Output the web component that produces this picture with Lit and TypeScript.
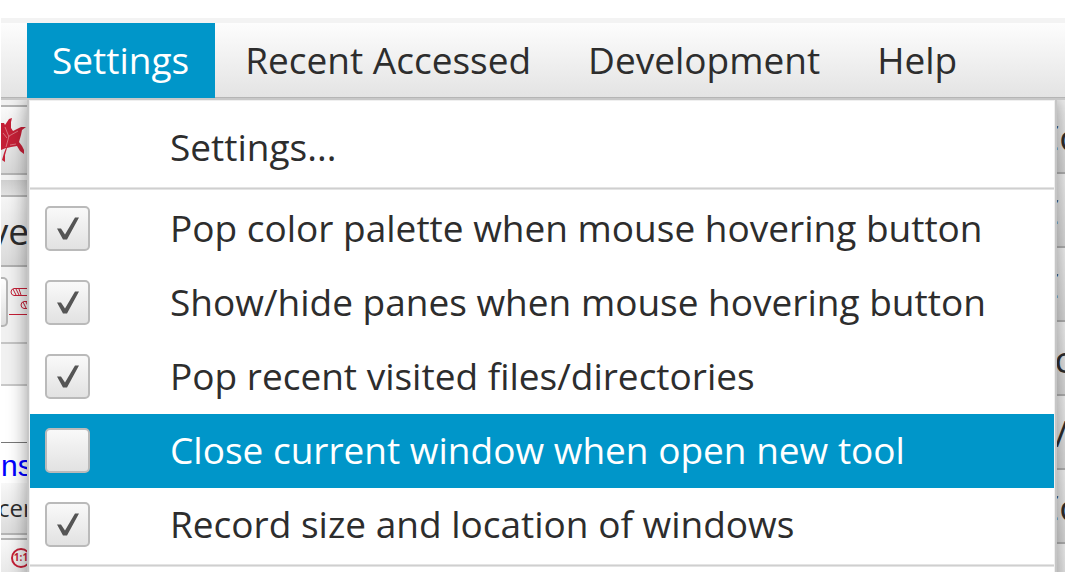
import { LitElement, html, css } from "lit";
import { customElement, state } from "lit/decorators.js";

interface Option {
  id: string;
  label: string;
  checked: boolean;
}

const MENUS = ["Settings", "Recent Accessed", "Development", "Help"];

const TOOLS = ["Co", "C|", "C|", "\u2002o", "\u2002/", "Co", "\u2002o"];

@customElement("app-root")
export class AppRoot extends LitElement {
  @state() private openMenu = "Settings";
  @state() private activeId = "close";
  @state() private options: Option[] = [
    { id: "palette", label: "Pop color palette when mouse hovering button", checked: true },
    { id: "panes", label: "Show/hide panes when mouse hovering button", checked: true },
    { id: "recent", label: "Pop recent visited files/directories", checked: true },
    { id: "close", label: "Close current window when open new tool", checked: false },
    { id: "record", label: "Record size and location of windows", checked: true },
  ];

  static styles = css`
    :host {
      display: flex;
      flex-direction: column;
      box-sizing: border-box;
      height: 100vh;
      padding: 18px 0 1px 1px;
      overflow: hidden;
      background: #fff;
      color: #2d2d2d;
      font-family: "Open Sans", "Noto Sans", sans-serif;
      font-size: 37px;
      line-height: 48px;
    }
    * {
      box-sizing: border-box;
    }
    .menubar {
      flex: none;
      display: flex;
      height: 80px;
      padding-left: 26px;
      border-top: 5px solid #f3f3f3;
      background: linear-gradient(#fdfdfd, #e3e3e3);
      box-shadow: inset 0 -1px #b5b5b5;
    }
    .menu {
      flex: none;
      padding: 0 26px 2px 25px;
      border: 0;
      background: none;
      color: inherit;
      font: inherit;
      white-space: nowrap;
    }
    .menu + .menu {
      padding: 0 27px 2px 30px;
    }
    .menu.open {
      background: #0096c9;
      color: #fff;
    }
    .workspace {
      position: relative;
      flex: 1;
      min-height: 0;
      display: flex;
      justify-content: space-between;
      overflow: hidden;
      border-top: 2px solid #c8c8c8;
    }
    .left {
      width: 44px;
      display: flex;
      flex-direction: column;
      overflow: hidden;
      background: #f1f1f1;
    }
    .left > * {
      flex: none;
      overflow: hidden;
      white-space: nowrap;
    }
    .tool {
      display: flex;
      align-items: flex-start;
      height: 70px;
      margin-top: 5px;
      padding: 10px 0 0;
      border: solid #b4b4b4;
      border-width: 2px 0;
      background: linear-gradient(#fafafa, #d8d8d8);
    }
    .strip {
      height: 17px;
      margin-top: 5px;
      border-bottom: 2px solid #b4b4b4;
      background: linear-gradient(#cfcfcf, #e2e2e2);
    }
    .header {
      height: 70px;
      padding-top: 10px;
      border-bottom: 2px solid #b0b0b0;
      background: linear-gradient(#f6f6f6, #dadada);
    }
    .header span {
      display: block;
      width: 28px;
      direction: rtl;
    }
    .icons {
      display: flex;
      gap: 1px;
      height: 77px;
      padding-top: 10px;
      border-bottom: 2px solid #c4c4c4;
    }
    .knob {
      width: 7px;
      height: 50px;
      padding: 0;
      border: 2px solid #b4b4b4;
      border-left: 0;
      border-radius: 0 5px 5px 0;
      background: linear-gradient(#fff, #dedede);
    }
    .band {
      height: 42px;
      border-bottom: 2px solid #c8c8c8;
    }
    .blank {
      height: 57px;
      border-bottom: 1px solid #777;
      background: #fff;
    }
    .link {
      height: 40px;
      background: #fff;
      color: #00f;
      font-family: "Liberation Sans", sans-serif;
      font-size: 30px;
      line-height: 46px;
      text-decoration: none;
    }
    .small {
      height: 52px;
      padding: 0;
      border: 0;
      border-bottom: 2px solid #b4b4b4;
      background: linear-gradient(#f8f8f8, #dcdcdc);
      color: inherit;
      font: 24px/50px "Open Sans", sans-serif;
      text-align: left;
      text-indent: -3px;
    }
    .ratio {
      display: flex;
      align-items: flex-start;
      height: 60px;
      margin-top: 3px;
      padding: 6px 0 0 8px;
      border: 0;
      border-top: 2px solid #b4b4b4;
      background: linear-gradient(#f8f8f8, #dcdcdc);
    }
    .ratio text {
      font: bold 10px "Open Sans", sans-serif;
    }
    svg {
      display: block;
      flex: none;
    }
    .right {
      width: 29px;
      display: flex;
      flex-direction: column;
      overflow: hidden;
    }
    .entry {
      flex: none;
      height: 74px;
      padding: 2px 0 0;
      border: 0;
      border-bottom: 2px solid #b0b0b0;
      background: linear-gradient(#f2f2f2, #d8d8d8);
      color: inherit;
      font: inherit;
      text-align: left;
      white-space: nowrap;
    }
    .popup {
      position: absolute;
      inset: -2px 8px auto 26px;
      padding: 1px;
      border: 2px solid #c6c6c6;
      background: #fff;
      box-shadow: inset 0 0 0 1px #efefef, 0 0 18px rgba(0, 0, 0, 0.4);
    }
    .item {
      display: flex;
      align-items: center;
      width: 100%;
      height: 74px;
      padding: 0 15px 2px;
      border: 0;
      background: none;
      color: inherit;
      font: inherit;
      text-align: left;
      white-space: nowrap;
    }
    .item.command {
      height: 86px;
      padding: 6px 15px 0 140px;
    }
    .item.active {
      background: #0096c9;
      color: #fff;
    }
    .separator {
      height: 3px;
      margin: 0 0 2px;
      border: solid #e4e4e4;
      border-width: 1px 0;
      background: #cfcfcf;
    }
    .item + .separator.last {
      margin: 2px 0 40px;
    }
    .box {
      appearance: none;
      flex: none;
      display: grid;
      width: 45px;
      height: 45px;
      margin: 0 80px 0 0;
      border: 2px solid #bababa;
      border-radius: 5px;
      background: linear-gradient(#f9f9f9, #e2e2e2);
    }
    .box:checked::before {
      content: "";
      background: #555;
      clip-path: polygon(10px 21px, 14px 21px, 18px 27px, 28px 10px, 32px 10px, 20px 32px, 16px 32px);
    }
  `;

  private toggle(id: string) {
    this.options = this.options.map((o) => (o.id === id ? { ...o, checked: !o.checked } : o));
  }

  private renderPopup() {
    return html`
      <div class="popup">
        <button class="item command">Settings...</button>
        <div class="separator"></div>
        ${this.options.map(
          (o) => html`
            <label
              class="item ${o.id === this.activeId ? "active" : ""}"
              for=${o.id}
              @mouseenter=${() => (this.activeId = o.id)}
            >
              <input class="box" type="checkbox" id=${o.id} .checked=${o.checked} @change=${() => this.toggle(o.id)} />
              <span>${o.label}</span>
            </label>
          `
        )}
        <div class="separator last"></div>
      </div>
    `;
  }

  render() {
    return html`
      <nav class="menubar">
        ${MENUS.map(
          (m) => html`<button class="menu ${m === this.openMenu ? "open" : ""}" @click=${() => (this.openMenu = m)}>${m}</button>`
        )}
      </nav>
      <main class="workspace">
        <div class="left">
          <button class="tool" aria-label="Leaf">
            <svg width="26" height="46" viewBox="0 0 26 46" fill="#c41f36">
              <path d="M0 6L3 6L4 8L6 5L8 2L11 1L10 5L10 11L12 14L16 12L20 10L25 10L21 13L20 18L18 25L21 29L23 33L23 37L19 34L16 29L10 30L6 31L4 38L4 45L1 43L3 36L5 31L0 33Z" />
              <path d="M5 30L8 19L17 14M8 20L4 10M9 28L15 27M2 16L6 21" fill="none" stroke="#df8690" stroke-width=".8" />
            </svg>
          </button>
          <div class="strip"></div>
          <div class="header"><span>ye</span></div>
          <div class="icons">
            <button class="knob" aria-label="Previous"></button>
            <svg width="34" height="50" viewBox="0 0 34 50" fill="none" stroke="#c41f36">
              <path d="M34 11.500H5Q2 12 2 15Q2 18 5 18.500H34M4 12L7 18M7 12L10 18M10 12L12 18M34 24.500H15Q12 25 12 28Q12 31 15 31.500H34M14 25L17 31M17 25L20 31M0 37.500H34" />
            </svg>
          </div>
          <div class="band"></div>
          <div class="blank"></div>
          <a class="link" href="#">ns</a>
          <button class="small">cen</button>
          <button class="ratio" aria-label="Actual size">
            <svg width="24" height="24" viewBox="0 0 24 24" fill="#c41f36">
              <circle cx="12" cy="12" r="9" fill="none" stroke="#c41f36" stroke-width="2" />
              <text x="12" y="15" text-anchor="middle">1:1</text>
            </svg>
          </button>
        </div>
        <div class="right">${TOOLS.map((t) => html`<button class="entry">${t}</button>`)}</div>
        ${this.openMenu === "Settings" ? this.renderPopup() : ""}
      </main>
    `;
  }
}
